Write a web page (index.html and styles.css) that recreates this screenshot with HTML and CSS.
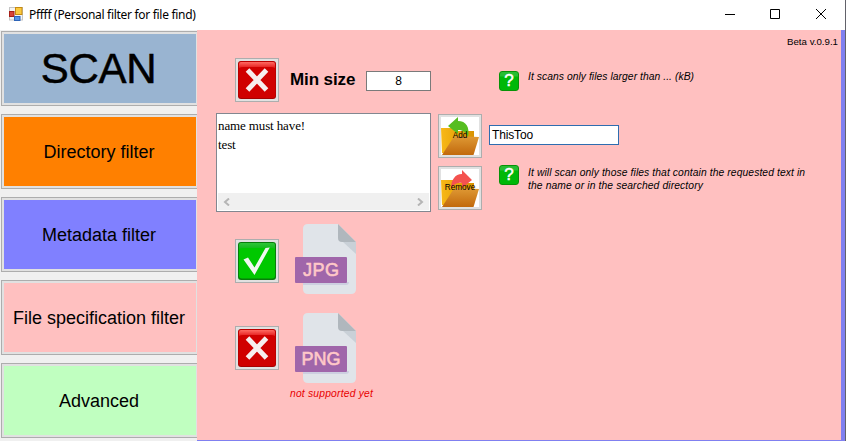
FILE: index.html
```html
<!DOCTYPE html>
<html lang="en">
<head>
<meta charset="utf-8">
<title>Pffff (Personal filter for file find)</title>
<link rel="stylesheet" href="styles.css">
</head>
<body>
<svg class="defs" width="0" height="0" aria-hidden="true">
  <defs>
    <linearGradient id="red-shine" x1="0" y1="0" x2="0" y2="1"><stop offset="0" stop-color="#ff6a62"/><stop offset="1" stop-color="#e31a1a"/></linearGradient>
    <linearGradient id="green-shine" x1="0" y1="0" x2="0" y2="1"><stop offset="0" stop-color="#2fc53a"/><stop offset="1" stop-color="#10b818"/></linearGradient>
    <linearGradient id="folder-front" x1="0" y1="0" x2="0" y2="1"><stop offset="0" stop-color="#df9a35"/><stop offset="1" stop-color="#c2690c"/></linearGradient>
    <linearGradient id="folder-back" x1="0" y1="0" x2="1" y2="0"><stop offset="0" stop-color="#f8b816"/><stop offset="1" stop-color="#d99300"/></linearGradient>
    <symbol id="cross" viewBox="0 0 38 38">
      <rect width="38" height="38" rx="3" fill="#a60000"/>
      <rect x=".5" y=".5" width="37" height="36.5" rx="3" fill="#d00000"/>
      <path d="M1 7V3q0-2 2-2h32q2 0 2 2v4q-2-.9-4-.9H5Q3 6.100 1 7z" fill="url(#red-shine)"/>
      <path d="M9.500 9 28.500 29M28.500 9 9.500 29" stroke="#f7eeee" stroke-width="5"/>
    </symbol>
    <symbol id="check" viewBox="0 0 38 38">
      <rect width="38" height="38" rx="3" fill="#087d0b"/>
      <rect x="1" y="1" width="36" height="35.500" rx="3" fill="#00c800"/>
      <path d="M1 7V3q0-2 2-2h32q2 0 2 2v4q-2-.9-4-.9H5Q3 6.100 1 7z" fill="url(#green-shine)"/>
      <path d="m5.500 17.500 4.500-2 6.500 10L27.500 6l4.300-.5L16.500 33z" fill="#f1f7f1"/>
    </symbol>
    <symbol id="folder" viewBox="0 0 38 38">
      <rect width="38" height="38" fill="#fff"/>
      <path d="M0 11h13l2 3h18v22H1z" fill="url(#folder-back)"/>
      <path d="M12 21 15 19 38 20 32.500 38H1z" fill="url(#folder-front)"/>
    </symbol>
    <symbol id="page" viewBox="0 0 62 70">
      <path d="M13 0h30l18 18v47q0 5-5 5H13q-5 0-5-5V5q0-5 5-5z" fill="#e0e4e9"/>
      <path d="M43 0v14q0 4 4 4h14z" fill="#b0b7bd"/>
      <path d="m48 18 13 12V18z" fill="#c9d0d7"/>
      <path d="M8 58h46q0 3-3 3H8z" fill="#cdcfe0"/>
      <path d="M0 34q0-1 1-1h50q1 0 1 1v24q0 1-1 1H1q-1 0-1-1z" fill="#a066aa"/>
    </symbol>
  </defs>
</svg>
<div class="window">
  <header class="titlebar">
    <svg class="app-icon" width="14" height="14" viewBox="0 0 14 14">
      <rect x=".5" y=".5" width="13" height="12.500" fill="#f4f4f4" stroke="#c5c5c5"/>
      <rect x="6.500" y=".5" width="6.500" height="7" fill="#fbc93e" stroke="#c58a12"/>
      <rect x=".5" y="4.500" width="4.500" height="5" fill="#d84337" stroke="#a61f18"/>
      <rect x="5.500" y="9.500" width="5.500" height="4" fill="#5793e6" stroke="#2d64b8"/>
    </svg>
    <span class="title">Pffff (Personal filter for file find)</span>
    <svg class="controls" width="102" height="12" viewBox="0 0 102 12" fill="none" stroke="#000">
      <path d="M0 6.500h10M45.500 1.500h9v9h-9zM91 1l10 10M101 1 91 11"/>
    </svg>
  </header>
  <div class="body">
    <nav class="sidebar">
      <button class="nav scan"><span>SCAN</span></button>
      <button class="nav directory"><span>Directory filter</span></button>
      <button class="nav metadata"><span>Metadata filter</span></button>
      <button class="nav filespec"><span>File specification filter</span></button>
      <button class="nav advanced"><span>Advanced</span></button>
    </nav>
    <main class="panel">
      <div class="version">Beta v.0.9.1</div>
      <section class="row size-row">
        <button class="tile"><svg width="38" height="38"><use href="#cross"/></svg></button>
        <span class="size-label">Min size</span>
        <div class="field number">8</div>
        <span class="help">?</span>
        <p class="hint"><span class="hint-size">It scans only files larger than ... (kB)</span></p>
      </section>
      <section class="row name-row">
        <div class="listbox">
          <div class="item">name must have!</div>
          <div class="item second">test</div>
          <div class="scrollbar">
            <svg width="7" height="8" viewBox="0 0 7 8"><path d="M6 .5 2 4 6 7.500" fill="none" stroke="#b5b5b5" stroke-width="2"/></svg>
            <svg width="7" height="8" viewBox="0 0 7 8"><path d="M1 .5 5 4 1 7.500" fill="none" stroke="#b5b5b5" stroke-width="2"/></svg>
          </div>
        </div>
        <div class="actions">
          <button class="tile folder">
            <svg width="38" height="38" viewBox="0 0 38 38"><use href="#folder"/><path d="M7 9 17 0v4c8 0 12 6 10 16-2-5-5-7-10-7v4z" fill="#56bd20"/></svg>
            <span>Add</span>
          </button>
          <button class="tile folder">
            <svg width="38" height="38" viewBox="0 0 38 38"><use href="#folder"/><path d="M31 11 21 1v4c-7 0-11 6-11 15 3-5 6-7 11-6v5z" fill="#f4524f"/></svg>
            <span>Remove</span>
          </button>
        </div>
        <div class="name-side">
          <div class="field name">ThisToo</div>
          <div class="name-help">
            <span class="help">?</span>
            <p class="hint"><span class="hint-one">It will scan only those files that contain the requested text in</span><br><span class="hint-two">the name or in the searched directory</span></p>
          </div>
        </div>
      </section>
      <section class="row type-row jpg">
        <button class="tile"><svg width="38" height="38"><use href="#check"/></svg></button>
        <div class="filetype"><svg width="62" height="70"><use href="#page"/></svg><span>JPG</span></div>
      </section>
      <section class="row type-row png">
        <button class="tile"><svg width="38" height="38"><use href="#cross"/></svg></button>
        <div class="filetype"><svg width="62" height="70"><use href="#page"/></svg><span>PNG</span></div>
      </section>
      <p class="unsupported">not supported yet</p>
    </main>
  </div>
</div>
</body>
</html>
```
FILE: styles.css
```css
* { box-sizing: border-box; }
body { margin: 0; font-family: "Liberation Sans", Arial, sans-serif; color: #000; overflow: hidden; }
p { margin: 0; }
button { font: inherit; color: inherit; border-radius: 0; margin: 0; padding: 0; }
.defs { position: absolute; }
.window { width: 846px; height: 441px; display: flex; flex-direction: column; background: #fff; border-right: 1px solid #62626a; }
.titlebar { height: 30px; flex: none; display: flex; align-items: center; padding: 0 18px 0 9px; }
.app-icon { margin-top: -2px; }
.title { flex: 1; margin-left: 6px; font: 12px/16px "Noto Sans", sans-serif; letter-spacing: -0.3px; white-space: nowrap; }
.controls { margin-top: -2px; }
.body { display: flex; flex: 1; min-height: 0; background: #8080f0; }
.sidebar { width: 197px; flex: none; background: #f0f0f0; padding: 1px 0 0 1px; display: flex; flex-direction: column; gap: 8px; overflow: hidden; }
.nav { width: 196px; height: 75px; flex: none; border: 1px solid #adadad; border-right: 0; padding: 2px 1px 0 0; box-shadow: inset 2px 2px 0 #e1e1e1, inset -1px -2px 0 #e1e1e1; font-size: 18px; white-space: nowrap; }
.scan { background: #99b4d1; font-size: 42px; padding: 0 2px 0 0; }
.scan span { letter-spacing: -0.25px; -webkit-text-stroke: .5px #000; }
.directory { background: #ff8000; }
.metadata { background: #8080ff; }
.filespec { background: #ffc0c0; }
.advanced { background: #c0ffc0; }
.panel { width: 644px; height: 410px; background: #ffc0c0; padding-left: 19px; flex: none; }
.version { height: 28px; padding: 6px 3px 0 0; text-align: right; font-size: 9.7px; line-height: 12px; }
.row { display: flex; }
.tile { width: 44px; height: 44px; flex: none; display: block; border: 1px solid #adadad; padding: 2px; background: #e1e1e1; }
.tile svg { display: block; }
.size-row { height: 55px; padding-left: 19px; }
.size-label { width: 76px; margin: 12px 0 0 11px; font-size: 17px; line-height: 20px; font-weight: bold; letter-spacing: -0.1px; white-space: nowrap; }
.field { height: 20px; background: #fff; border: 1px solid #7a7a7a; font-size: 12px; line-height: 18px; letter-spacing: -0.15px; }
.number { width: 65px; margin: 13px 68px 0 0; text-align: center; }
.help { width: 20px; height: 20px; flex: none; border: 1px solid #079307; border-radius: 3px; background: linear-gradient(#28bd33 0 4px, #00b808 5px); color: #fff; font-size: 17px; line-height: 18px; text-align: center; -webkit-text-stroke: .5px #fff; }
.size-row .help { margin-top: 13px; }
.hint { margin-left: 9px; font-size: 10.3px; line-height: 13px; font-style: italic; white-space: nowrap; }
.hint-size { letter-spacing: 0.06px; }
.hint-one { letter-spacing: 0.1px; }
.hint-two { letter-spacing: 0.12px; }
.size-row .hint { margin-top: 12px; }
.name-row { height: 99px; }
.listbox { width: 215px; height: 99px; border: 1px solid #828790; background: #fff; padding: 3px 1px 1px; display: flex; flex-direction: column; font: 13px/19px "Liberation Serif", serif; letter-spacing: -0.12px; }
.item { height: 19px; line-height: 18px; }
.scrollbar { height: 17px; margin-top: auto; background: #f0f0f0; display: flex; justify-content: space-between; align-items: center; padding: 0 5px; }
.actions { margin: 1px 7px 0; display: flex; flex-direction: column; gap: 8px; }
.folder { position: relative; }
.folder span { position: absolute; inset: 15px 0 auto; font-size: 8.2px; line-height: 12px; text-align: center; }
.name-side { padding-top: 12px; }
.name { width: 130px; padding-left: 2px; border-color: #2e6db0; }
.name-help { display: flex; padding: 20px 0 0 10px; }
.name-help .hint { margin-top: 1px; }
.type-row { padding-left: 19px; height: 70px; align-items: center; }
.type-row .tile { margin: 4px 16px 0 0; }
.jpg { margin-top: 12px; }
.png { margin-top: 19px; }
.png .tile { margin-top: 0; }
.filetype { position: relative; height: 70px; }
.filetype svg { display: block; }
.filetype span { position: absolute; left: 0; top: 36px; width: 52px; text-align: center; color: #ffc8c8; font-size: 18px; line-height: 20px; letter-spacing: .6px; text-indent: .6px; -webkit-text-stroke: .6px #ffc8c8; }
.png .filetype span { letter-spacing: 0; text-indent: 0; }
.unsupported { margin: 4px 0 0 74px; font-size: 10.3px; line-height: 13px; font-style: italic; letter-spacing: 0.2px; color: #e80000; white-space: nowrap; }
```
